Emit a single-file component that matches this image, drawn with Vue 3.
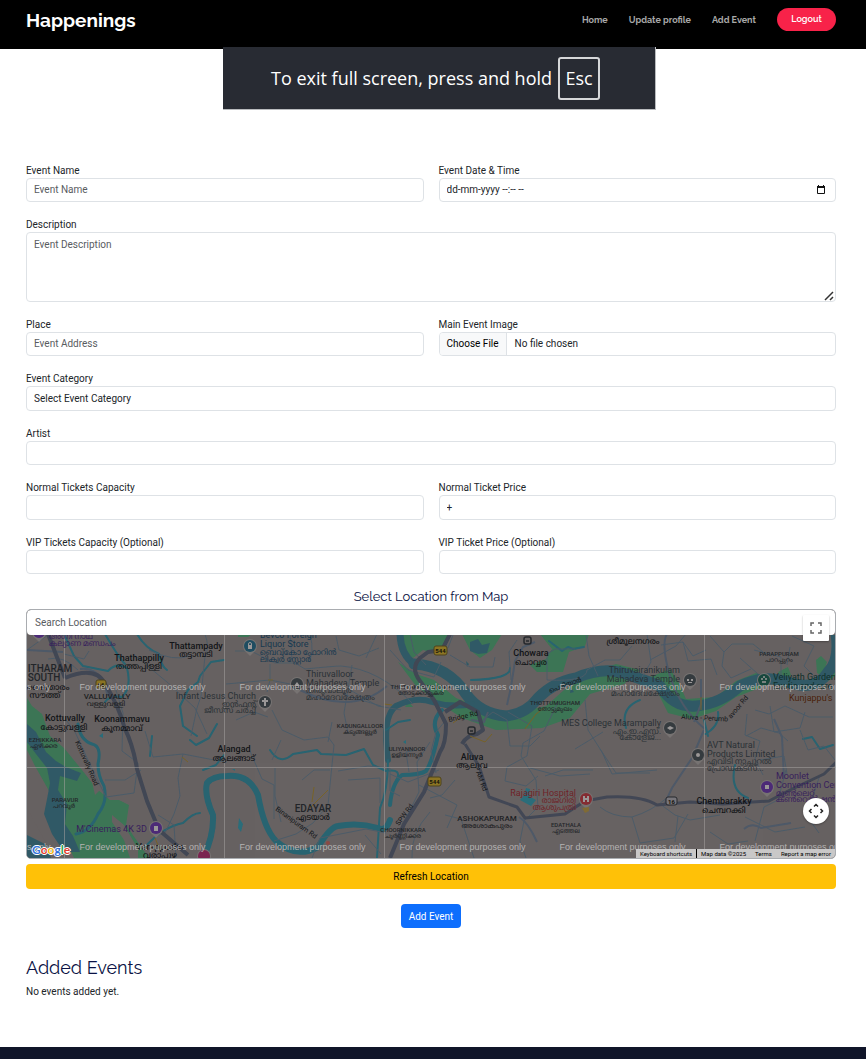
<script setup>
import { ref } from 'vue'

const eventName = ref('')
const eventDate = ref('dd-mm-yyyy --:-- --')
const description = ref('')
const place = ref('')
const category = ref('')
const artist = ref('')
const normalCapacity = ref('')
const normalPrice = ref('+')
const vipCapacity = ref('')
const vipPrice = ref('')
const location = ref('')

const watermarkColumns = [-75.5, 79.5, 239.5, 399.5, 559.5, 719.5]
const watermarkRows = [690, 850]

// Latin names are set one step larger than their Malayalam counterparts.
const scriptOf = (text) => (/^[\x20-\x7e]+$/.test(text) ? 'latin' : 'malayalam')

const labels = [
  { x: 139, y: 661, kind: 'town', text: 'Thathappilly' },
  { x: 139, y: 669, kind: 'town', text: 'തത്തപ്പിള്ളി' },
  { x: 196, y: 649, kind: 'town', text: 'Thattampady' },
  { x: 196, y: 657, kind: 'town', text: 'തട്ടാമ്പടി' },
  { x: 50, y: 672, kind: 'area', text: 'ITHARAM' },
  { x: 44, y: 681, kind: 'area', text: 'SOUTH' },
  { x: 48, y: 690, kind: 'town', text: 'കൈതാരം' },
  { x: 45, y: 698, kind: 'town', text: 'സൗത്ത്' },
  { x: 107, y: 699, kind: 'small', text: 'VALLUVALLY' },
  { x: 106, y: 706, kind: 'small', text: 'വള്ളുവള്ളി' },
  { x: 65, y: 721, kind: 'town', text: 'Kottuvally' },
  { x: 64, y: 730, kind: 'town', text: 'കോട്ടുവള്ളി' },
  { x: 122, y: 722, kind: 'town', text: 'Koonammavu' },
  { x: 122, y: 731, kind: 'town', text: 'കൂനമ്മാവ്' },
  { x: 45, y: 742, kind: 'tiny', text: 'EZHIKKARA' },
  { x: 44, y: 748, kind: 'tiny', text: 'ഏഴിക്കര' },
  { x: 65, y: 802, kind: 'tiny', text: 'PARAVUR' },
  { x: 64, y: 808, kind: 'tiny', text: 'പറവൂർ' },
  { x: 160, y: 850, kind: 'town', text: 'Varappuzha' },
  { x: 160, y: 858, kind: 'town', text: 'വരാപ്പുഴ' },
  { x: 234, y: 752, kind: 'town', text: 'Alangad' },
  { x: 234, y: 761, kind: 'town', text: 'ആലങ്ങാട്' },
  { x: 313, y: 812, kind: 'area', text: 'EDAYAR' },
  { x: 313, y: 820, kind: 'town', text: 'എടയാർ' },
  { x: 360, y: 728, kind: 'tiny', text: 'KADUNGALLOOR' },
  { x: 360, y: 734, kind: 'tiny', text: 'കടുങ്ങല്ലൂർ' },
  { x: 407, y: 751, kind: 'tiny', text: 'ULIYANNOOR' },
  { x: 407, y: 757, kind: 'tiny', text: 'ഉളിയന്നൂർ' },
  { x: 403, y: 832, kind: 'tiny', text: 'CHOORNIKKARA' },
  { x: 403, y: 838, kind: 'tiny', text: 'ചൂർണ്ണിക്കര' },
  { x: 421, y: 689, kind: 'tiny', text: 'THOTTAKKATTUKARA' },
  { x: 421, y: 695, kind: 'tiny', text: 'തോട്ടക്കാട്ടുകര' },
  { x: 531, y: 656, kind: 'town', text: 'Chowara' },
  { x: 531, y: 665, kind: 'town', text: 'ചൊവ്വര' },
  { x: 555, y: 705, kind: 'tiny', text: 'THOTTUMUGHAM' },
  { x: 555, y: 711, kind: 'tiny', text: 'തോട്ടുമുഖം' },
  { x: 472, y: 760, kind: 'town', text: 'Aluva' },
  { x: 472, y: 768, kind: 'town', text: 'ആലുവ' },
  { x: 487, y: 821, kind: 'small', text: 'ASHOKAPURAM' },
  { x: 487, y: 828, kind: 'small', text: 'അശോകപുരം' },
  { x: 566, y: 827, kind: 'tiny', text: 'EDATHALA' },
  { x: 566, y: 833, kind: 'tiny', text: 'എടത്തല' },
  { x: 633, y: 644, kind: 'town', text: 'ശ്രീമൂലനഗരം' },
  { x: 779, y: 656, kind: 'tiny', text: 'PARAPPURAM' },
  { x: 779, y: 662, kind: 'tiny', text: 'പാറപ്പുറം' },
  { x: 724, y: 804, kind: 'town', text: 'Chembarakky' },
  { x: 724, y: 813, kind: 'town', text: 'ചെമ്പറക്കി' },
]

const places = [
  { x: 49, y: 639, anchor: 'start', tone: 'purple', text: 'അഗ്നി നാഥ' },
  { x: 49, y: 646, anchor: 'start', tone: 'purple', text: 'കല്യാണ മണ്ഡപം' },
  { x: 260, y: 638, anchor: 'start', tone: 'blue', text: 'Bevco Foreign' },
  { x: 260, y: 647, anchor: 'start', tone: 'blue', text: 'Liquor Store' },
  { x: 260, y: 655, anchor: 'start', tone: 'blue', text: 'ബെവ്കോ ഫോറിൻ' },
  { x: 260, y: 662, anchor: 'start', tone: 'blue', text: 'ലിക്വർ സ്റ്റോർ' },
  { x: 306, y: 677, anchor: 'start', tone: 'grey', text: 'Thiruvalloor' },
  { x: 306, y: 686, anchor: 'start', tone: 'grey', text: 'Mahadeva Temple' },
  { x: 306, y: 693, anchor: 'start', tone: 'grey', text: 'തിരുവാലൂർ' },
  { x: 306, y: 700, anchor: 'start', tone: 'grey', text: 'മഹാദേവക്ഷേത്രം' },
  { x: 256, y: 699, anchor: 'end', tone: 'grey', text: 'Infant Jesus Church' },
  { x: 256, y: 707, anchor: 'end', tone: 'grey', text: 'ഇൻഫന്റ്' },
  { x: 256, y: 713, anchor: 'end', tone: 'grey', text: 'ജീസസ് ചർച്ച്' },
  { x: 680, y: 673, anchor: 'end', tone: 'grey', text: 'Thiruvairanikulam' },
  { x: 680, y: 682, anchor: 'end', tone: 'grey', text: 'Mahadeva Temple' },
  { x: 680, y: 696, anchor: 'end', tone: 'grey', text: 'മഹാദേവക്ഷേത്രം' },
  { x: 661, y: 726, anchor: 'end', tone: 'grey', text: 'MES College Marampally' },
  { x: 661, y: 734, anchor: 'end', tone: 'grey', text: 'എം.ഇ.എസ്.' },
  { x: 661, y: 740, anchor: 'end', tone: 'grey', text: 'കോളേജ്...' },
  { x: 707, y: 748, anchor: 'start', tone: 'grey', text: 'AVT Natural' },
  { x: 707, y: 757, anchor: 'start', tone: 'grey', text: 'Products Limited' },
  { x: 707, y: 764, anchor: 'start', tone: 'grey', text: 'എവിടി നാച്ചുറൽ' },
  { x: 707, y: 771, anchor: 'start', tone: 'grey', text: 'പ്രോഡക്ട്സ്...' },
  { x: 773, y: 680, anchor: 'start', tone: 'green', text: 'Veliyath Gardens' },
  { x: 773, y: 689, anchor: 'start', tone: 'green', text: 'Exotic and rare' },
  { x: 789, y: 701, anchor: 'start', tone: 'brown', text: "Kunjappu's" },
  { x: 776, y: 779, anchor: 'start', tone: 'purple', text: 'Moonlet' },
  { x: 776, y: 788, anchor: 'start', tone: 'purple', text: 'Convention Center' },
  { x: 776, y: 796, anchor: 'start', tone: 'purple', text: 'മൂൺലെറ്റ്' },
  { x: 776, y: 802, anchor: 'start', tone: 'purple', text: 'കൺവെൻഷൻ സെന്റർ' },
  { x: 147, y: 832, anchor: 'end', tone: 'purple', text: "M'Cinemas 4K 3D" },
  { x: 576, y: 796, anchor: 'end', tone: 'red', text: 'Rajagiri Hospital' },
  { x: 576, y: 803, anchor: 'end', tone: 'red', text: 'രാജഗിരി' },
  { x: 576, y: 810, anchor: 'end', tone: 'red', text: 'ആശുപത്രി' },
]

const pins = [
  { x: 250, y: 646, fill: '#1f4d61' },
  { x: 297, y: 684, fill: '#353b3f' },
  { x: 265, y: 702, fill: '#353b3f' },
  { x: 690, y: 680, fill: '#353b3f' },
  { x: 670, y: 728, fill: '#353b3f' },
  { x: 698, y: 755, fill: '#353b3f' },
  { x: 764, y: 680, fill: '#17483d' },
  { x: 767, y: 787, fill: '#4c2a77' },
  { x: 156, y: 828, fill: '#4c2a77' },
  { x: 586, y: 799, fill: '#842c32' },
  { x: 204, y: 856, fill: '#7b2450' },
  { x: 39, y: 632, fill: '#4c2a77' },
]
</script>

<template>
  <div class="page">
    <header class="topbar">
      <a class="brand" href="#">Happenings</a>
      <nav class="nav">
        <a href="#">Home</a>
        <a href="#">Update profile</a>
        <a href="#">Add Event</a>
        <button type="button" class="logout">Logout</button>
      </nav>
    </header>

    <div class="toast" role="status">
      <span>To exit full screen, press and hold</span>
      <kbd>Esc</kbd>
    </div>

    <main class="content">
      <form class="form" @submit.prevent>
        <div class="field">
          <label for="name">Event Name</label>
          <input id="name" v-model="eventName" class="control" type="text" placeholder="Event Name">
        </div>
        <div class="field">
          <label for="date">Event Date &amp; Time</label>
          <div class="date control">
            <input id="date" v-model="eventDate" type="text">
            <button type="button" class="picker" aria-label="Open calendar">
              <svg viewBox="0 0 10 10" width="10" height="10">
                <path d="M1.500 1.500h7v7h-7z" fill="none" stroke="#111" />
                <path d="M1 1h8v2H1zM2 0h1v2H2zM7 0h1v2H7z" fill="#111" />
              </svg>
            </button>
          </div>
        </div>
        <div class="field wide">
          <label for="description">Description</label>
          <div class="area-box">
            <textarea id="description" v-model="description" class="control" placeholder="Event Description"></textarea>
            <svg class="grip" viewBox="0 0 10 10" width="10" height="10">
              <path d="M1 9L9 1M6 9l3-3" fill="none" stroke="#333" stroke-width="1.5" />
            </svg>
          </div>
        </div>
        <div class="field">
          <label for="place">Place</label>
          <input id="place" v-model="place" class="control" type="text" placeholder="Event Address">
        </div>
        <div class="field">
          <label for="image">Main Event Image</label>
          <input id="image" class="control file" type="file">
        </div>
        <div class="field wide">
          <label for="category">Event Category</label>
          <select id="category" v-model="category" class="control tall">
            <option value="">Select Event Category</option>
          </select>
        </div>
        <div class="field wide">
          <label for="artist">Artist</label>
          <input id="artist" v-model="artist" class="control" type="text">
        </div>
        <div class="field">
          <label for="normal-capacity">Normal Tickets Capacity</label>
          <input id="normal-capacity" v-model="normalCapacity" class="control tall" type="text">
        </div>
        <div class="field">
          <label for="normal-price">Normal Ticket Price</label>
          <input id="normal-price" v-model="normalPrice" class="control tall" type="text">
        </div>
        <div class="field">
          <label for="vip-capacity">VIP Tickets Capacity (Optional)</label>
          <input id="vip-capacity" v-model="vipCapacity" class="control" type="text">
        </div>
        <div class="field">
          <label for="vip-price">VIP Ticket Price (Optional)</label>
          <input id="vip-price" v-model="vipPrice" class="control" type="text">
        </div>

        <section class="location wide">
          <h2>Select Location from Map</h2>
          <div class="map">
            <input v-model="location" class="search" type="text" placeholder="Search Location" aria-label="Search Location">
            <svg class="canvas" viewBox="27 635 808 223" preserveAspectRatio="xMidYMid slice">
              <rect x="27" y="600" width="808" height="260" fill="#676262" />

              <g fill="#3c7656">
                <path d="M27 698l5 8 10 8 8 22 14 12 18 22 14 18 14 12 9 0 10 5-3 20 18 26 18 22H98L84 858 66 858 54 834 44 810 36 786 27 768z" />
                <path d="M238 634h14l-4 3h-10z" />
                <path d="M400 634h49l-4 14-8 6-14-4-10 8-12-8z" />
                <path d="M462 634h40l-10 16-12 8-10-8z" />
                <path d="M540 634h49l-4 12-16 6-6 20-26 0-7-7 16-6 6-10z" />
                <path d="M398 662l18 12 18 6 22 18 32 12 32 2 26-6 18-16 30-18 22-8 24 6-16 14-34 10-20 24-28 10-46 2-34-12-24-16-22-16z" />
                <path d="M650 677l20-8 8 12 8 18 30-2 20-16 20-8 18 6-12 8-26 10-20 14-24 8-24-6z" />
                <path d="M778 672l10-5 3 8-8 5zM816 660l5-4 6 6-5 14-5-3z" />
                <path d="M824 672l11-14v18l-8 6zM409 702l4 5h-8z" />
              </g>
              <g fill="#676262">
                <path d="M27 750l8 16 18 32 5 25 16 35H54L39 830 27 808z" />
                <path d="M92 782l14-3-3 8-8 8zM112 815l12 10 14 24 0 9h-8l-6-18-12-18z" />
              </g>
              <g fill="#315a66">
                <path d="M27 724l9 8 10 20 10 9 10 6 15 6-4 8-17-5-2 14 9 14-2 20 8 12 7 16H64L52 834 44 814l3-15 3-16-3-15-11-14-9-12z" />
                <path d="M470 642l8-3 4 6 8-2-3 10-9 1-8-3z" />
                <path d="M27 835l20 10 4 13H27z" />
                <path d="M571 688l3 4-4 1zM466 661l3 3-2 3z" />
              </g>

              <g fill="none" stroke="#315a66" stroke-linecap="round" stroke-linejoin="round">
                <path stroke-width="7" d="M400 632q0 22 14 32" />
                <path stroke-width="11" d="M414 664q34 2 52 30 14 20 40 22 20-2 32-18 16-16 38-20 28-12 50-4 24 8 34 12 14 22 36 20 24-2 44-20 24-12 48-4 28 10 40-10 12-12 8-38" />
                <path stroke-width="6" d="M388 760q-6-44 8-54 20-10 36-4 20 6 40 2" />
              </g>

              <g fill="none" stroke="#286471" stroke-linecap="round" stroke-linejoin="round">
                <path stroke-width="3" d="M78 724q2 16 14 20 10 2 6 20 0 12 6 22 4 16-6 28-8 18-22 20" />
                <path stroke-width="6" d="M203 858q11-22 10-43-9-20-6-32 6-7 20-7 22-2 31 19 6 34 18 46 20 18 42 6 12-20 20-21 20-4 40 2 8 4 12-8" />
                <path stroke-width="4" d="M390 805q2-22 12-30 18 0 24-4 6-8 12-36-8-14 4-25" />
                <path stroke-width="2" d="M64 634l10 22 9 10 25 5q8-9 19-3 5 20-5 29-12-2-17 5M105 634q14 24 20 30M137 634q8 14 22 20 2 12 8 16M224 660l-13 2-11 14-2 6-10 8-8 16 3 20 14 10M152 736l-2 20M190 740l6 5 13-7 8-14M145 847q18-20 38-24 10-10 17-10M224 755l-8 10-13 5M270 750q10 16 23 4l24-4 4 4 25 1 18-6 9 16 13 6q17-3 10 10M386 730l12-8 12-2M471 680q40-1 39-12M549 641l13 10 6-4 5 2 11-2M626 728q-6-20 14-28M708 736l-4-16M735 765q-6 26 13 33M803 739l9-2 8 12 13-4M705 734q15-8 13-22M388 760q0 30-8 48l-3 50" />
              </g>

              <g fill="none" stroke="#4c5c69" stroke-width="1">
                <path d="M27 650l25-18M64 654l20 5 5-8M48 659q15-4 30 11M66 720l9 12 21 45 10 20 28-4 4-30-16-12 1-38-8-26M105 780h20l16-10M158 815l16 10 2 33M145 731l8 26 30-3 26 5 17 3M183 754l-5 24 2 18-6 18-10 21M133 654l34 28 28 26 12 26M149 650q25 12 40 6M205 634q5 14 0 22l-4 40-4 12-6 28M235 651h16l24 12 20 0 10 6M226 684l44-4 20 4M270 664v16l-3 12M305 669q30-3 36-3 38 3 72 38M350 690l28 16 23 4M343 694q24 8 38 12M290 634l2 26M310 634q5 20-2 28M336 636l3 14 20 6 20-8M377 634l-11 24M272 710l10 20 22 10 24-3 6 8-6 60-15 18-17 11-22 7M275 768v28l6 26M302 780l12-10h16M250 751l12 28 12 6 0 34M352 665l-8 48 4 20M332 722l-4 20M338 771l30-5 22 2v23l10 5M348 780l32-2v25M312 858l8-20 46-9 20 4M365 835l16 19M281 740l-9 20M236 720l18-8 14 5M390 650l18 20 26 7 7-15M410 634l4 18 12 13M517 640l-8 12 2 28M448 648l5-13M450 655l20 12 23 0 2-10M547 680v-26l8-5h20M547 680q40 2 40-10l18-10h15l12-14M480 722l13-10 14 8 3 26 20 0 10-10M508 712l24 14-5 30-20 11-2 14 21 5 12-10M521 756l15 24 2 27-14 14-4 20 6 17M530 768l30 8 30-2M545 776l18-6 30 0M585 700l3 30 14 22 10 22 45-4M600 749l16 24h34M558 702l-14 29-21 12-2 13M575 749l28-17M600 807q12 10 32 10 20-6 36-20M632 817l8 26 34-5 14-24M586 634l3 22 9 20M647 634l4 28-9 15M650 660l26-14 10-12M661 645l22-3 5 19 23-2 6 16M683 642l10 14 13-6M710 636l14 16 8-8 21 0 10 8M724 652l-2 14 9 12 20-9M740 658l18 16M754 650l27 7v18M790 647l-3 18M792 636l22 10-10 20 14 14M747 714l-2 21 15 6-5 18 8 16M755 710l14 4 16-8 24 11 24 0M770 706l4 26 26-4 5-16M800 730l8 20 16-4 11 14M746 736l15-8 18 5 9 8M786 770l-8 30-14 7-9 34M760 760l24-4 3 18M720 815l-30 5-15-5-15-11M710 832l18 12 20-3M678 816l-3 26M820 775l-14 40 13 18M745 817l30 15 30-5" />
                <path d="M430 742l-13 20 2 30-12 24M446 720l-10 12-5 19 5 22M417 750l-11 2 3 20M390 774l18 8 31-12M419 785l38 20-10 23M430 812q-20 22-18 46M445 815l16 4 13 39M455 780l-13 15-12 3" />
              </g>
              <g fill="none" stroke="#4e5968" stroke-width="2">
                <path d="M27 650l36 2M80 669q12-2 22 9l6 18M300 690q52 26 87-4M705 729q-25-20-36-56-8-30-2-39M704 730l-12 28-20 30-8 17M507 705l4-18 4-26 8-14 12-5M471 720l13 2 4-10M537 842q-9-20-18-25M694 722l7-18v-25M784 779l-2-42-8-18M744 829q8-7 17-1l30-5" />
              </g>
              <g fill="none" stroke="#424755" stroke-width="4" stroke-linejoin="round">
                <path d="M48 634l17 44M65 678q31-13 40 6 13 20 20 45 8 16 12 40l10 32 12 29 29 25M450 634l-8 16-14 2-8 6q-10 10 0 23l14 19 12 24q0 20-6 28l-16 40-20 32-14 34M462 744q5-9 15-10l6-4-5-18-18-10-15 10" />
                <path stroke-width="3" d="M465 744l14 22 10 31 28 10 8 11 40-4 20-13 22-4q34-2 50 8l33-3 33 2 46-3 19-10 36-17 27-26" />
              </g>
              <g fill="none" stroke="#776328">
                <path d="M182 757l6 5M155 838l5 12M312 802l2-15M310 808l18-18M268 680h5M525 729l11-15 8-6M470 736l15 6 7-8M453 723l11-8M701 710v-13M384 704l8 1" />
              </g>

              <g fill="#2a6d7a">
                <path d="M520 800l4-5 2-7 4 1-1 7 7 4-5 6zM99 736l4-3v5zM239 818l4 6-2 8-3-4zM232 769h3v2zM403 742l3-2v4z" />
              </g>

              <g stroke="#a5a19f" stroke-width="1" opacity="0.55">
                <path d="M64.500 600V860M224.500 600V860M384.500 600V860M704.500 600V860M27 767.500H835" />
              </g>

              <g class="roads">
                <text transform="translate(75 742) rotate(66)">Kottuvally Road</text>
                <text transform="translate(275 810) rotate(36)">Binanipuram Rd</text>
                <text transform="translate(399 826) rotate(-54)">SPW Rd</text>
                <text transform="translate(449 722) rotate(-13)">Bridge Rd</text>
                <text transform="translate(476 772) rotate(70)">AM Rd</text>
                <text transform="translate(681 719) rotate(3)">Aluva - Perumb</text>
                <text transform="translate(731 719) rotate(-50)">avoor Rd</text>
                <text transform="translate(550 693) rotate(-20)">പെരിയാർ</text>
              </g>

              <text
                v-for="(item, i) in places"
                :key="'p' + i"
                :class="['place', item.tone, scriptOf(item.text)]"
                :x="item.x"
                :y="item.y"
                :text-anchor="item.anchor"
              >{{ item.text }}</text>
              <text
                v-for="(item, i) in labels"
                :key="'l' + i"
                :class="[item.kind, scriptOf(item.text)]"
                :x="item.x"
                :y="item.y"
                text-anchor="middle"
              >{{ item.text }}</text>

              <g v-for="(pin, i) in pins" :key="'pin' + i" :transform="`translate(${pin.x} ${pin.y})`">
                <path d="M-6 4L0 10L6 4z" fill="#777372" />
                <circle r="7" fill="#777372" />
                <circle r="6" :fill="pin.fill" />
              </g>
              <g fill="#9a9797">
                <path d="M248 645h4v4h-4zM294 686l3-4 3 4zM264 698h2v2h2v2h-2v4h-2v-4h-2v-2h2zM667 728l3-2 4 2-4 2zM765 785h4v4h-4zM154 826h4v5h-4z" />
                <circle cx="698" cy="755" r="2" />
                <path d="M687 679h2v2h-2zM691 679h2v2h-2zM688 682h4v1h-4zM583 796h2v2h2v-2h2v6h-2v-2h-2v2h-2z" />
                <circle cx="764" cy="677" r="1" /><circle cx="762" cy="679" r="1" /><circle cx="766" cy="679" r="1" /><circle cx="763" cy="682" r="1" /><circle cx="765" cy="682" r="1" />
              </g>
              <g fill="none" stroke="#25282d" stroke-width="1.500">
                <rect x="524" y="637" width="7" height="7" rx="2" />
                <rect x="468" y="727" width="7" height="7" rx="2" />
                <path d="M526 641h3M470 731h3" />
              </g>
              <path d="M248.500 645v-1a1.500 1.500 0 0 1 3 0v1" fill="none" stroke="#9a9797" />

              <g class="shield">
                <rect x="434" y="646" width="13" height="9" rx="2" />
                <text x="440.500" y="653">544</text>
                <rect x="428" y="777" width="13" height="9" rx="2" />
                <text x="434.500" y="784">544</text>
                <rect x="96" y="680" width="10" height="8" rx="2" />
                <text x="101" y="686.500">66</text>
                <rect class="white" x="666" y="797" width="11" height="8" rx="2" />
                <text x="671.500" y="803.500">16</text>
              </g>
              <path d="M582 808l7-1v4l-4 2z" fill="#806b35" />
              <circle cx="328" cy="843" r="2" fill="#8d4944" />

              <g class="watermark">
                <template v-for="y in watermarkRows" :key="y">
                  <text v-for="x in watermarkColumns" :key="x" :x="x" :y="y">For development purposes only</text>
                </template>
              </g>
            </svg>

            <span class="google" aria-label="Google"><i class="b">G</i><i class="r">o</i><i class="y">o</i><i class="b">g</i><i class="g">l</i><i class="r">e</i></span>

            <button type="button" class="fullscreen" aria-label="Toggle fullscreen view">
              <svg viewBox="0 0 12 12" width="12" height="12">
                <path d="M1 4V1h3M8 1h3v3M11 8v3H8M4 11H1V8" fill="none" stroke="#666" stroke-width="1.500" />
              </svg>
            </button>
            <button type="button" class="pan" aria-label="Map camera controls">
              <svg viewBox="0 0 16 16" width="16" height="16">
                <path d="M6 3.500L8 1.500l2 2M6 12.500l2 2 2-2M3.500 6l-2 2 2 2M12.500 6l2 2-2 2" fill="none" stroke="#222" stroke-width="1.500" />
              </svg>
            </button>
            <div class="credits">
              <button type="button">Keyboard shortcuts</button>
              <span>Map data ©2025</span>
              <a href="#">Terms</a>
              <a href="#">Report a map error</a>
            </div>
          </div>
          <button type="button" class="refresh">Refresh Location</button>
        </section>

        <button type="submit" class="submit">Add Event</button>
      </form>

      <section class="added">
        <h1>Added Events</h1>
        <p>No events added yet.</p>
      </section>
    </main>

    <footer class="footer"></footer>
  </div>
</template>

<style>
body {
  margin: 0;
  background: #fff;
}
</style>

<style scoped>
.page {
  position: relative;
  display: flex;
  flex-direction: column;
  min-height: 100vh;
  font: 10px/15px Roboto, "Liberation Sans", sans-serif;
  color: #212529;
}
.page *,
.page *::before {
  box-sizing: border-box;
}
button,
input,
textarea,
select {
  font: inherit;
  color: inherit;
  margin: 0;
}
a {
  color: inherit;
  text-decoration: none;
}
.topbar {
  display: flex;
  justify-content: space-between;
  align-items: center;
  height: 49px;
  padding: 0 30px 10px 26px;
  background: #000;
  font-family: Raleway, Lato, sans-serif;
}
.brand {
  color: #fff;
  font-size: 19px;
  line-height: 24px;
  font-weight: 700;
}
.nav {
  display: flex;
  align-items: center;
  gap: 21px;
  font-size: 9px;
  line-height: 16px;
  font-weight: 700;
  color: #a8a8a8;
}
.logout {
  width: 59px;
  height: 23px;
  padding: 0 0 1px;
  border: 0;
  border-radius: 12px;
  background: #f82249;
  color: #fff;
  font-weight: 600;
}
.toast {
  position: absolute;
  top: 47px;
  left: 50%;
  display: flex;
  align-items: center;
  gap: 6px;
  width: 433px;
  height: 63px;
  padding-left: 48px;
  margin-left: -210px;
  border: solid #b9bbbe;
  border-width: 0 1px 1px 0;
  background: #282b33;
  color: #fff;
  font: 18px/24px "Open Sans", "Noto Sans", sans-serif;
  white-space: nowrap;
}
.toast kbd {
  display: flex;
  align-items: center;
  justify-content: center;
  width: 42px;
  height: 43px;
  border: 2px solid #d6d7d9;
  border-radius: 3px;
  font: inherit;
}
.content {
  flex: 1;
  padding: 114px 30px 48px 26px;
}
.form {
  display: grid;
  grid-template-columns: 1fr 1fr;
  gap: 15px;
}
.wide {
  grid-column: 1 / -1;
}
.field {
  display: flex;
  flex-direction: column;
  min-width: 0;
}
.control {
  display: block;
  width: 100%;
  height: 24px;
  padding: 0 7px 1px;
  border: 1px solid #dee2e6;
  border-radius: 4px;
  background: #fff;
  outline: 0;
}
.tall {
  height: 25px;
}
.control::placeholder,
.search::placeholder {
  color: #595c5f;
  opacity: 1;
}
select.control {
  appearance: none;
}
.date {
  display: flex;
  align-items: center;
}
.date input {
  flex: 1;
  min-width: 0;
  padding: 0;
  border: 0;
  outline: 0;
}
.picker {
  display: flex;
  padding: 0;
  border: 0;
  margin-right: 2px;
  background: none;
}
.area-box {
  position: relative;
}
textarea.control {
  height: 70px;
  padding: 4px 7px;
  resize: none;
}
.grip {
  position: absolute;
  right: 2px;
  bottom: 1px;
}
.file {
  padding: 0;
  line-height: 22px;
  overflow: hidden;
}
.file::file-selector-button {
  height: 22px;
  padding: 0 7px;
  margin: 0 8px 0 0;
  border: 0;
  border-right: 1px solid #dee2e6;
  background: #f8f9fa;
  color: #000;
  font: inherit;
}
.location {
  display: flex;
  flex-direction: column;
}
h1,
h2 {
  margin: 0;
  font-family: Raleway, Lato, sans-serif;
  font-weight: 400;
  color: #0a1244;
}
h2 {
  font-size: 13px;
  line-height: 16px;
  padding-bottom: 4px;
  text-align: center;
}
.map {
  position: relative;
  height: 250px;
  border: 1px solid #a9acb0;
  border-radius: 5px;
  overflow: hidden;
  display: flex;
  flex-direction: column;
  background: #676262;
}
.search {
  width: 100%;
  height: 25px;
  padding: 0 8px;
  border: 0;
  border-radius: 4px;
  background: #fff;
  outline: 0;
}
.canvas {
  display: block;
  width: 100%;
  flex: 1;
  min-height: 0;
}
.canvas text {
  font-family: Roboto, "Noto Sans Malayalam", sans-serif;
}
.town {
  font-size: 8px;
  font-weight: 500;
  fill: #121417;
}
.area {
  font-size: 10px;
  font-weight: 500;
  fill: #222529;
}
.small {
  font-size: 7px;
  font-weight: 500;
  fill: #1e2124;
}
.tiny {
  font-size: 6px;
  font-weight: 500;
  fill: #24272a;
}
.place {
  font-size: 8px;
}
.town.latin,
.place.latin {
  font-size: 9px;
}
.small.latin {
  font-size: 8px;
}
.grey {
  fill: #2b3136;
}
.blue {
  fill: #17384f;
}
.green {
  fill: #0f2f29;
}
.brown {
  fill: #4b220a;
}
.purple {
  fill: #38205c;
}
.red {
  fill: #6f2228;
}
.roads text {
  font-size: 7px;
  fill: #15171a;
}
.shield rect {
  fill: #8b7423;
  stroke: #4d431e;
}
.shield rect.white {
  fill: #77757a;
  stroke: #26282c;
}
.shield text {
  font-size: 6px;
  font-weight: 700;
  fill: #15130c;
  text-anchor: middle;
}
.canvas .watermark text {
  font-family: "Liberation Sans", Roboto, sans-serif;
  font-size: 9px;
  fill: #b5b3b2;
}
.google {
  position: absolute;
  left: 5px;
  bottom: 1px;
  font: 700 12px/15px Lato, sans-serif;
  text-shadow: 1px 0 #fff, -1px 0 #fff, 0 1px #fff, 0 -1px #fff;
}
.google i {
  font-style: normal;
}
.google .b {
  color: #3273dc;
}
.google .r {
  color: #e33b2e;
}
.google .y {
  color: #f2b50b;
}
.google .g {
  color: #2ba24c;
}
.fullscreen,
.pan {
  position: absolute;
  right: 6px;
  display: flex;
  align-items: center;
  justify-content: center;
  width: 26px;
  height: 26px;
  padding: 0;
  border: 0;
  background: #fff;
  box-shadow: 0 1px 2px rgba(0, 0, 0, 0.3);
}
.fullscreen {
  top: 5px;
  border-radius: 1px;
}
.pan {
  bottom: 34px;
  border-radius: 50%;
}
.credits {
  position: absolute;
  right: 0;
  bottom: 0;
  display: flex;
  gap: 9px;
  height: 9px;
  padding-right: 4px;
  background: #c9c8c8;
  color: #000;
  font-size: 6px;
  line-height: 9px;
}
.credits button {
  height: 9px;
  padding: 0 4px;
  border: 0;
  border-right: 1px solid #000;
  margin-right: -5px;
  background: none;
  line-height: 9px;
}
.refresh {
  height: 25px;
  margin-top: 5px;
  border: 0;
  border-radius: 4px;
  background: #ffc107;
  color: #000;
}
.submit {
  grid-column: 1 / -1;
  justify-self: center;
  height: 24px;
  padding: 0 8px;
  border: 0;
  border-radius: 4px;
  background: #0d6efd;
  color: #fff;
}
.added {
  margin-top: 28px;
}
h1 {
  font-size: 18px;
  line-height: 23px;
}
.added p {
  margin: 5px 0 0;
}
.footer {
  height: 12px;
  background: #101529;
}
</style>
